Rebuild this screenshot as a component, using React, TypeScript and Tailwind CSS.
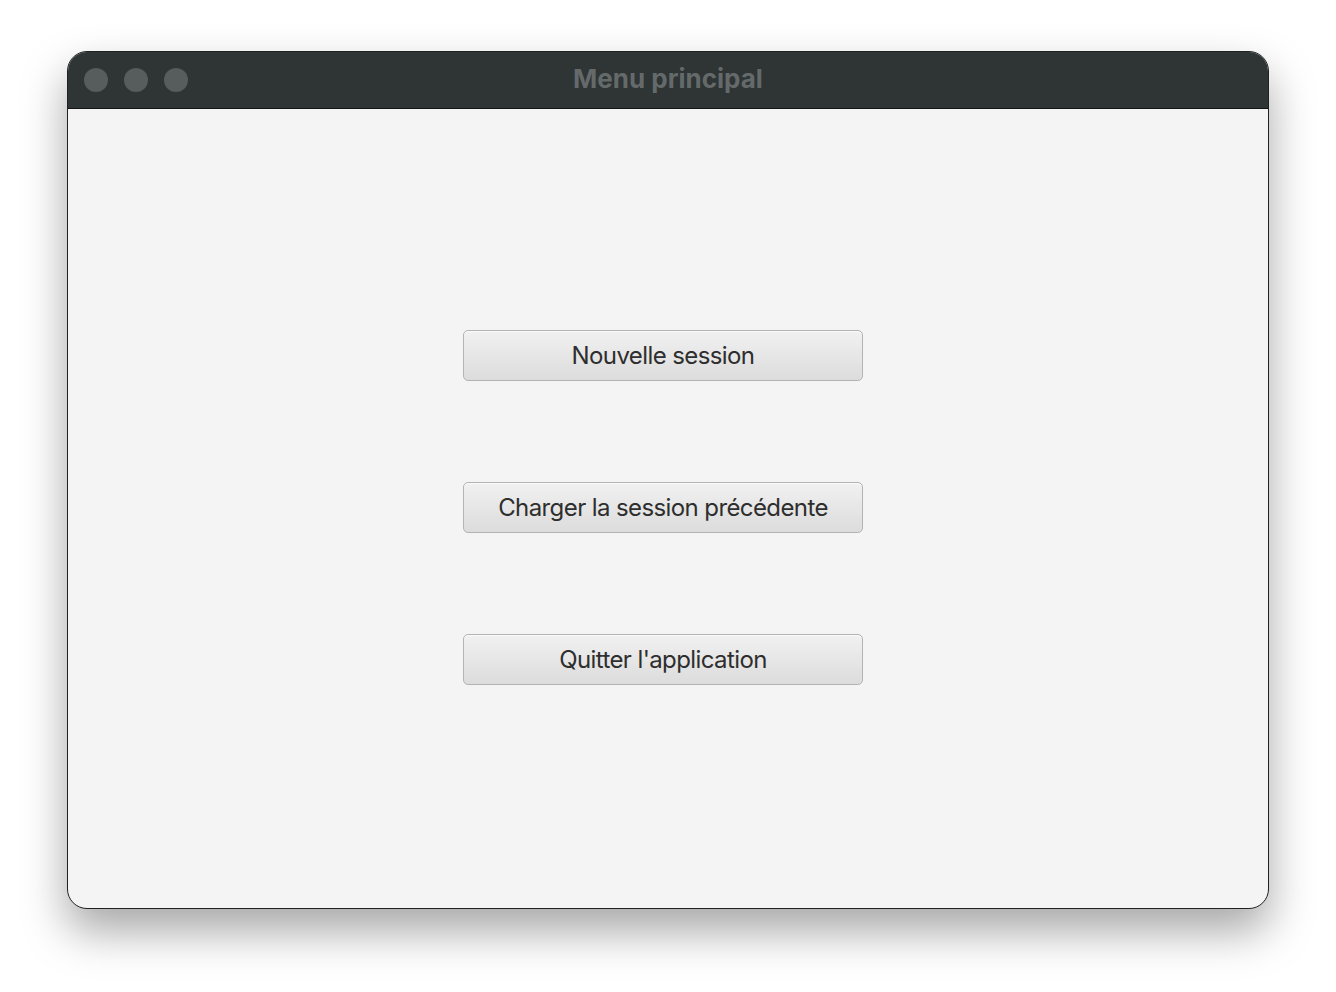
const buttons = ["Nouvelle session", "Charger la session précédente", "Quitter l'application"];

export default function App() {
  return (
    <div className="w-[1336px] h-[992px] bg-white pt-[51px] pl-[67px]" style={{ fontFamily: "Inter, 'Noto Sans', sans-serif" }}>
      <div className="w-[1202px] h-[858px] rounded-[20px] border border-[#1e2222] overflow-hidden flex flex-col bg-[#f4f4f4] shadow-[0_22px_45px_rgba(0,0,0,0.35)]">
        {/* Title bar */}
        <div className="relative h-[57px] shrink-0 bg-[#2f3435] border-b border-[#121515] flex items-center justify-center pb-[3px]">
          <div className="absolute left-[16px] top-[16px] flex gap-[16px]">
            <span className="w-[24px] h-[24px] rounded-full bg-[#575d5d]" />
            <span className="w-[24px] h-[24px] rounded-full bg-[#575d5d]" />
            <span className="w-[24px] h-[24px] rounded-full bg-[#575d5d]" />
          </div>
          <span className="text-[26px] font-bold text-[#646a6a]">Menu principal</span>
        </div>

        {/* Content */}
        <div className="flex-1 flex flex-col items-center justify-center gap-[101px] pr-[10px] pb-[3px]">
          {buttons.map((label) => (
            <button
              key={label}
              className="w-[400px] h-[51px] rounded-[5px] border border-[#b3b3b3] bg-gradient-to-b from-[#f1f1f1] to-[#dcdcdc] text-[24px] text-[#2e2e2e] tracking-[-0.6px] pt-[1px] shadow-[inset_0_1px_0_#fafafa]"
            >
              {label}
            </button>
          ))}
        </div>
      </div>
    </div>
  );
}
